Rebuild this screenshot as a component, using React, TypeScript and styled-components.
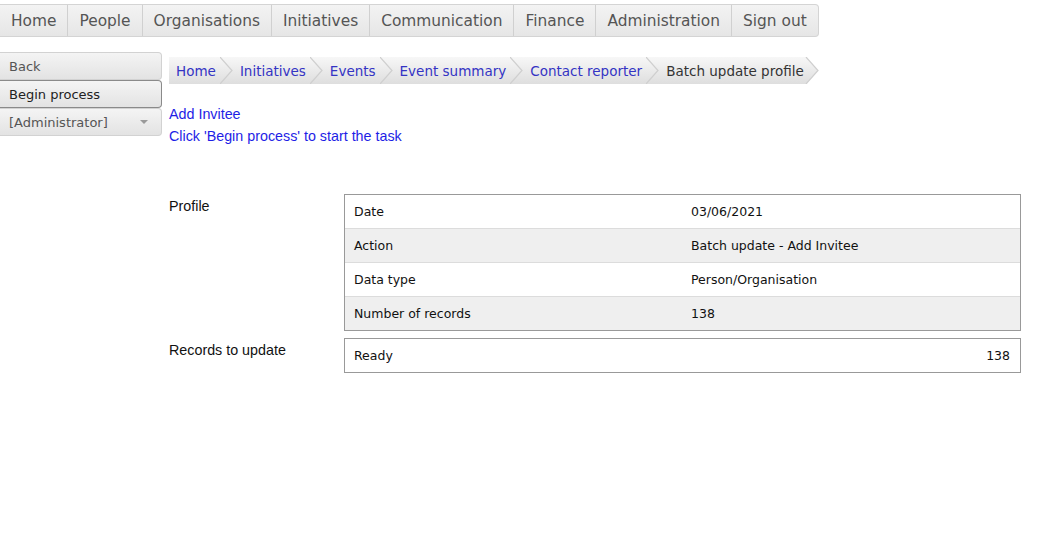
import React from "react";
import styled, { createGlobalStyle } from "styled-components";

const GlobalStyle = createGlobalStyle`
  body {
    margin: 0;
    background: #fff;
    font-family: "DejaVu Sans", Verdana, sans-serif;
  }
`;

const Page = styled.div`
  display: flex;
  flex-flow: column nowrap;
  padding-top: 4px;
`;

const NavBar = styled.nav`
  display: flex;
  flex-flow: row nowrap;
  align-self: flex-start;
  height: 31px;
  border: 1px solid #d4d4d4;
  border-left: none;
  border-radius: 0 4px 4px 0;
  background: linear-gradient(#f3f3f3, #e6e6e6);
`;

const NavItem = styled.a`
  display: flex;
  align-items: center;
  padding: 0 11px;
  font-size: 15.4px;
  color: #555;
  text-decoration: none;
  border-left: 1px solid #d0d0d0;

  &:first-child {
    border-left: none;
  }
`;

const Body = styled.div`
  display: flex;
  flex-flow: row nowrap;
  align-items: flex-start;
`;

const Sidebar = styled.div`
  display: flex;
  flex-flow: column nowrap;
  width: 162px;
  margin-top: 15px;
`;

const SideButton = styled.div<{ $active?: boolean }>`
  display: flex;
  align-items: center;
  justify-content: space-between;
  height: 26px;
  padding: 0 13px 0 9px;
  font-size: 13px;
  color: ${(p) => (p.$active ? "#222" : "#555")};
  background: linear-gradient(#f4f4f4, #e3e3e3);
  border: 1px solid ${(p) => (p.$active ? "#8a8a8a" : "#d2d2d2")};
  border-left: none;
  border-radius: 0 4px 4px 0;
`;

const Caret = styled.span`
  width: 0;
  height: 0;
  border-left: 4px solid transparent;
  border-right: 4px solid transparent;
  border-top: 4px solid #9a9a9a;
`;

const Main = styled.div`
  display: flex;
  flex-flow: column nowrap;
  margin-left: 7px;
  margin-top: 20px;
`;

const Breadcrumb = styled.div`
  display: flex;
  flex-flow: row nowrap;
  align-self: flex-start;
  height: 27px;
`;

const Crumb = styled.a<{ $current?: boolean }>`
  display: flex;
  align-items: center;
  padding: 0 ${(p) => (p.$current ? 1 : 4)}px 0 7px;
  font-size: 13.5px;
  color: ${(p) => (p.$current ? "#333" : "#3434c4")};
  text-decoration: none;
  background: linear-gradient(#f7f7f7, #dedede);
`;

const Sep = styled.svg`
  display: block;
  flex: none;
`;

const Chevron = ({ last }: { last?: boolean }) => (
  <Sep width={last ? 14 : 13} height={27} viewBox={`0 0 ${last ? 14 : 13} 27`}>
    <defs>
      <linearGradient id={last ? "bgl" : "bg"} x1="0" y1="0" x2="0" y2="1">
        <stop offset="0" stopColor="#f7f7f7" />
        <stop offset="1" stopColor="#dedede" />
      </linearGradient>
    </defs>
    {last ? (
      <>
        <rect x="0" y="0" width="1" height="27" fill="url(#bgl)" />
        <polygon points="1,0 13,13.5 1,27" fill="url(#bgl)" />
        <polyline points="1,0 13,13.5 1,27" fill="none" stroke="#cfcfcf" strokeWidth="1.2" />
      </>
    ) : (
      <>
        <rect x="0" y="0" width="13" height="27" fill="url(#bg)" />
        <polyline points="0,0 12,13.5 0,27" fill="none" stroke="#cfcfcf" strokeWidth="1.2" />
      </>
    )}
  </Sep>
);

const Messages = styled.div`
  display: flex;
  flex-flow: column nowrap;
  margin-top: 19px;
  font-family: "Liberation Sans", Arial, sans-serif;
  font-size: 14.3px;
  line-height: 22px;
  color: #1e1ee6;
`;

const Form = styled.div`
  display: grid;
  grid-template-columns: 175px 677px;
  row-gap: 7px;
  margin-top: 47px;
`;

const FieldLabel = styled.div`
  padding-top: 4px;
  font-family: "Liberation Sans", Arial, sans-serif;
  font-size: 14.3px;
  color: #111;
`;

const Table = styled.div`
  display: flex;
  flex-flow: column nowrap;
  border: 1px solid #999;
`;

const Row = styled.div<{ $alt?: boolean; $split?: boolean }>`
  display: grid;
  grid-template-columns: ${(p) => (p.$split ? "1fr auto" : "337px 1fr")};
  align-items: center;
  height: 33px;
  padding: 0 10px 0 9px;
  font-size: 12.5px;
  color: #111;
  background: ${(p) => (p.$alt ? "#efefef" : "#fff")};
  border-top: 1px solid #dcdcdc;

  &:first-child {
    border-top: none;
  }
`;

const crumbs = ["Home", "Initiatives", "Events", "Event summary", "Contact reporter"];
const navItems = [
  "Home",
  "People",
  "Organisations",
  "Initiatives",
  "Communication",
  "Finance",
  "Administration",
  "Sign out",
];

const profile = [
  ["Date", "03/06/2021"],
  ["Action", "Batch update - Add Invitee"],
  ["Data type", "Person/Organisation"],
  ["Number of records", "138"],
];

export default function App() {
  return (
    <Page>
      <GlobalStyle />
      <NavBar>
        {navItems.map((n) => (
          <NavItem key={n}>{n}</NavItem>
        ))}
      </NavBar>
      <Body>
        <Sidebar>
          <SideButton>Back</SideButton>
          <SideButton $active>Begin process</SideButton>
          <SideButton>
            [Administrator]
            <Caret />
          </SideButton>
        </Sidebar>
        <Main>
          <Breadcrumb>
            {crumbs.map((c) => (
              <React.Fragment key={c}>
                <Crumb>{c}</Crumb>
                <Chevron />
              </React.Fragment>
            ))}
            <Crumb $current>Batch update profile</Crumb>
            <Chevron last />
          </Breadcrumb>
          <Messages>
            <span>Add Invitee</span>
            <span>Click 'Begin process' to start the task</span>
          </Messages>
          <Form>
            <FieldLabel>Profile</FieldLabel>
            <Table>
              {profile.map(([k, v], i) => (
                <Row key={k} $alt={i % 2 === 1}>
                  <span>{k}</span>
                  <span>{v}</span>
                </Row>
              ))}
            </Table>
            <FieldLabel>Records to update</FieldLabel>
            <Table>
              <Row $split>
                <span>Ready</span>
                <span>138</span>
              </Row>
            </Table>
          </Form>
        </Main>
      </Body>
    </Page>
  );
}
